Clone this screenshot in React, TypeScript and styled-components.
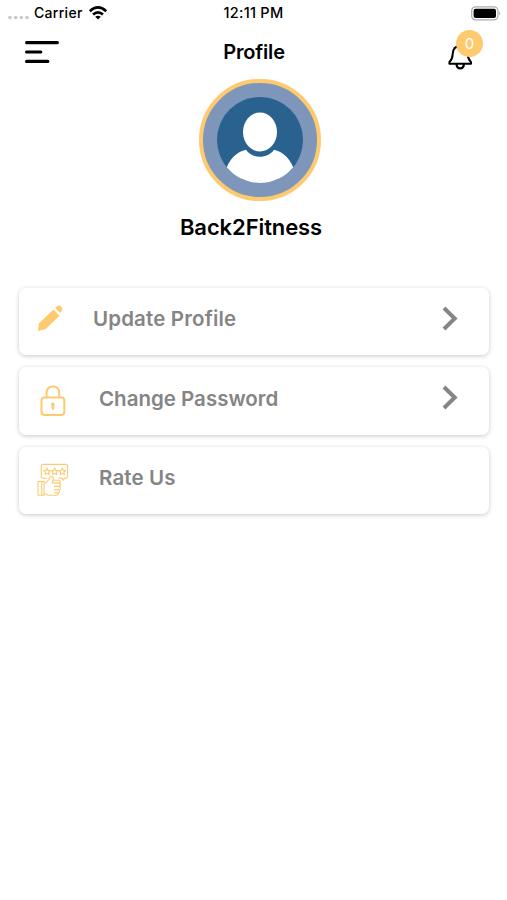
import React from 'react';
import styled, { createGlobalStyle } from 'styled-components';

const amber = '#fdca70';

const GlobalStyle = createGlobalStyle`
  * { box-sizing: border-box; }
  body { margin: 0; background: #fff; font-family: Inter, "Liberation Sans", sans-serif; }
  svg { display: block; flex: none; }
`;

const Screen = styled.main`
  width: 507px;
  height: 900px;
  background: #fff;
  color: #000;
  display: flex;
  flex-direction: column;
  overflow: hidden;
`;

const StatusBar = styled.div`
  height: 26px;
  display: grid;
  grid-template-columns: 1fr auto 1fr;
  align-items: center;
  padding: 0 6px 0 8px;
  font-size: 14px;
  font-weight: 500;
  line-height: 26px;
`;

const Carrier = styled.div`
  display: flex;
  align-items: center;
  gap: 5px;
`;

const CarrierName = styled.span`
  letter-spacing: 0.3px;
`;

const Time = styled.span`
  font-size: 14.5px;
  letter-spacing: 0.25px;
  margin-right: 2px;
`;

const BatterySlot = styled.div`
  display: flex;
  justify-content: flex-end;
`;

const Header = styled.header`
  height: 53px;
  display: grid;
  grid-template-columns: 1fr auto 1fr;
  align-items: center;
  padding: 0 24px 1px 25px;
`;

const Title = styled.h1`
  margin: 0;
  font-size: 20px;
  font-weight: 600;
  line-height: 24px;
  letter-spacing: -0.15px;
`;

const Bell = styled.div`
  position: relative;
  justify-self: end;
  width: 35px;
  height: 44px;
  padding-top: 13px;
`;

const Badge = styled.span`
  position: absolute;
  top: 0;
  right: 0;
  width: 27px;
  height: 27px;
  border-radius: 50%;
  background: ${amber};
  color: #fff;
  font-size: 15px;
  line-height: 27px;
  text-align: center;
`;

const Identity = styled.section`
  display: flex;
  flex-direction: column;
  align-items: center;
  height: 209px;
`;

const Avatar = styled.div`
  width: 122px;
  height: 122px;
  margin-left: 13px;
  border: 4px solid ${amber};
  border-radius: 50%;
  background: #7d96b9;
  display: flex;
  align-items: center;
  justify-content: center;
`;

const Name = styled.h2`
  margin: 12px 5px 0 0;
  font-size: 22px;
  line-height: 28px;
  font-weight: 600;
  letter-spacing: -0.1px;
`;

const Menu = styled.nav`
  display: flex;
  flex-direction: column;
  gap: 12px;
  padding: 0 18px 0 19px;
`;

const Card = styled.a<{ $indent: number }>`
  height: 67.4px;
  display: grid;
  grid-template-columns: ${(p) => p.$indent}px 1fr auto;
  align-items: center;
  padding: 0 31px 6px 18px;
  border-radius: 7px;
  background: #fff;
  box-shadow: 0 1px 4px rgba(0, 0, 0, 0.22);
`;

const Label = styled.span<{ $tracking: number }>`
  color: #858585;
  font-size: 20.5px;
  font-weight: 600;
  letter-spacing: ${(p) => p.$tracking}px;
`;

const IconBox = styled.span<{ $drop: number; $inset: number }>`
  padding-top: ${(p) => p.$drop}px;
  padding-left: ${(p) => p.$inset}px;
`;

const SignalDots = () => (
  <svg width="21" height="20" fill="#c9c9c9">
    {[2, 7.7, 13.3, 19].map((x) => <circle key={x} cx={x} cy="14.5" r="1.8" />)}
  </svg>
);

const Wifi = () => (
  <svg width="20" height="16" viewBox="0 0 20 16" fill="none" stroke="#000" strokeWidth="2.6">
    <path d="M1.8 6.200Q10-1.300 18.200 6.200M5 9.600q5-4.400 10 0" />
    <path d="M7.200 11.700q2.800-2.100 5.600 0L10 14.500z" fill="#000" stroke="none" />
  </svg>
);

const Battery = () => (
  <svg width="30" height="15" viewBox="0 0 30 15">
    <rect x=".7" y=".9" width="26.2" height="13" rx="3.8" fill="none" stroke="#aaa" strokeWidth="1.2" />
    <rect x="2.6" y="2.8" width="22.4" height="9.3" rx="2" />
    <path d="M28.3 5.2q1.8 2.1 0 4.3z" fill="#999" />
  </svg>
);

const MenuLines = () => (
  <svg width="34" height="24" viewBox="0 0 34 24" stroke="#000" strokeWidth="3.2" strokeLinecap="round">
    <path d="M1.6 2.6h30.8M1.6 12h14.2M1.6 21.4h21.2" />
  </svg>
);

const BellIcon = () => (
  <svg width="25" height="28" viewBox="0 0 25 28" fill="none" stroke="#000" strokeWidth="2" strokeLinejoin="round" strokeLinecap="round">
    <path d="M12.300 3C6 3 4.700 7 4.600 11.500c0 4-1.200 5.500-3.200 7.700v1.500h21.600v-1.500c-2-2.200-3.200-3.700-3.200-7.700C19.700 7 18.600 3 12.300 3z" />
    <path d="M8.500 21.500q.5 3.800 3.700 3.800t3.700-3.800" strokeWidth="2.200" />
  </svg>
);

const Person = () => (
  <svg width="86" height="86" viewBox="0 0 86 86">
    <circle cx="43" cy="43" r="43" fill="#29628f" />
    <ellipse cx="43" cy="35" rx="17" ry="19.5" fill="#fff" />
    <path d="M9.800 70.300C14 60.500 20 55 29 52.800c3.300 4.800 8.600 7 14 7s10.700-2.200 14-7c9 2.200 15 7.700 19.200 17.500A43 43 0 0 1 9.800 70.300z" fill="#fff" />
  </svg>
);

const Pencil = () => (
  <svg width="27" height="27" viewBox="0 0 27 27" fill={amber}>
    <path d="m16.500 4.600 6 6.200L8.500 24.300.8 25.900l1.200-7.600z" />
    <path d="m18 3 1.700-1.500c1.400-1.300 3.200-1.100 4.500.2s1.600 3.100.3 4.500L23.200 8z" />
  </svg>
);

const Lock = () => (
  <svg width="26" height="32" viewBox="0 0 26 32" fill="none" stroke={amber} strokeWidth="2">
    <rect x="1.500" y="12.600" width="22.800" height="17.300" rx="2.800" />
    <path d="M6.600 12.600V8q0-6.500 6.300-6.500T19.200 8v4.600" />
    <path d="M11.200 20a1.800 1.800 0 1 1 3.300 0l-.6 4.800h-1.700z" fill={amber} stroke="none" />
  </svg>
);

const star = 'l1 2.200 2.300.3-1.700 1.700.4 2.400-2-1.200-2 1.200.4-2.400-1.700-1.700 2.300-.3z';

const Rating = () => (
  <svg width="32" height="34" viewBox="0 0 32 34" fill="none" stroke={amber} strokeWidth="1.1" strokeLinejoin="round">
    <path d="M4.300 13.800V3q0-1.600 1.600-1.600h23q1.600 0 1.600 1.600v10.500q0 1.600-1.600 1.600h-1.200l-1.500 2-1.500-2h-3M4.300 13.800q0 1.400 1.400 1.400H10" />
    <path d={`M10 5${star}M17.700 5${star}M25.300 5${star}`} />
    <path d="M1 18.500h6v13.700H1zM4.700 18.500v13.700M7 20.500c3-1 5-3.400 6-6.800 2.600-.6 4 .8 3.100 3.600l-1 2.600h6.400c2.300 0 2.600 3 .5 3.500 2.200.5 1.600 3.300-.2 3.500 1.300.8.900 2.700-.8 2.900.6 1.500-.3 2.400-1.900 2.400h-8L7 30.500M17 23.400h5M17 26.900h4.800M17 29.800h4" />
    <path d="M16 17.200h5.700q1.500 0 1.500 1.700t-1.500 1.400" />
  </svg>
);

const Chevron = () => (
  <svg width="16" height="26" viewBox="0 0 16 26" fill="none" stroke="#858585" strokeWidth="4">
    <path d="m2 2 10.700 10.500L2 23" />
  </svg>
);

const items = [
  { label: 'Update Profile', icon: <Pencil />, indent: 56, drop: 0, inset: 0, arrow: true, tracking: 0.15 },
  { label: 'Change Password', icon: <Lock />, indent: 62, drop: 6, inset: 3, arrow: true, tracking: 0 },
  { label: 'Rate Us', icon: <Rating />, indent: 62, drop: 5, inset: 0, arrow: false, tracking: 0.15 },
];

export default function App() {
  return (
    <Screen>
      <GlobalStyle />
      <StatusBar>
        <Carrier><SignalDots /><CarrierName>Carrier</CarrierName><Wifi /></Carrier>
        <Time>12:11 PM</Time>
        <BatterySlot><Battery /></BatterySlot>
      </StatusBar>
      <Header>
        <MenuLines />
        <Title>Profile</Title>
        <Bell><BellIcon /><Badge>0</Badge></Bell>
      </Header>
      <Identity>
        <Avatar><Person /></Avatar>
        <Name>Back2Fitness</Name>
      </Identity>
      <Menu>
        {items.map((item) => (
          <Card key={item.label} $indent={item.indent}>
            <IconBox $drop={item.drop} $inset={item.inset}>{item.icon}</IconBox>
            <Label $tracking={item.tracking}>{item.label}</Label>
            {item.arrow && <Chevron />}
          </Card>
        ))}
      </Menu>
    </Screen>
  );
}
